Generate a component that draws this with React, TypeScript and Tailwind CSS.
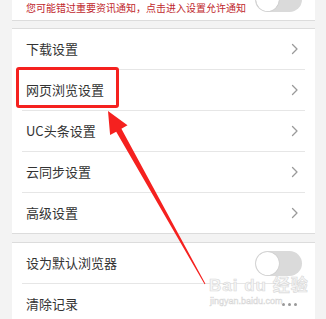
import React from 'react'

const font = { fontFamily: '"Noto Sans CJK SC", "Noto Sans", sans-serif' }

function Chevron() {
  return (
    <svg width="8" height="12" viewBox="0 0 8 12" className="shrink-0">
      <polyline points="1.5,1.5 6,6 1.5,10.5" fill="none" stroke="#9a9a9a" strokeWidth="1.3" strokeLinecap="round" strokeLinejoin="round" />
    </svg>
  )
}

function Toggle() {
  return (
    <div className="w-[47px] h-[25px] rounded-full bg-[#dadada] p-[1px] shrink-0">
      <div className="w-[23px] h-[23px] rounded-full bg-white shadow-[0_0_1px_rgba(0,0,0,0.25)]" />
    </div>
  )
}

function Row({ label, last }: { label: string; last?: boolean }) {
  return (
    <>
      <div className="h-[40px] flex items-center justify-between pl-[14px] pr-[16px]">
        <span className="text-[13px] text-[#333]">{label}</span>
        <Chevron />
      </div>
      {!last && <div className="mx-[10px] h-px bg-[#e6e6e6]" />}
    </>
  )
}

export default function App() {
  const rows = ['下载设置', '网页浏览设置', 'UC头条设置', '云同步设置', '高级设置']

  return (
    <div className="relative w-[326px] h-[319px] overflow-hidden bg-[#f3f3f3]" style={font}>
      <div className="mx-[12px] w-[303px]">
        {/* 通知 */}
        <div className="h-[21px] bg-white border-b border-[#dcdcdc] overflow-hidden flex items-end justify-between pl-[14px] pr-[13px]">
          <span className="text-[10px] leading-none text-[#c0272d] pb-[7px] whitespace-nowrap">
            您可能错过重要资讯通知，点击进入设置允许通知
          </span>
          <div className="mb-[8px]">
            <Toggle />
          </div>
        </div>

        <div className="h-[7px]" />

        <div className="bg-white border-y border-[#dcdcdc]">
          {rows.map((r, i) => (
            <Row key={r} label={r} last={i === rows.length - 1} />
          ))}
        </div>

        <div className="h-[8px]" />

        <div className="bg-white border-t border-[#dcdcdc]">
          <div className="h-[40px] flex items-center justify-between pl-[14px] pr-[13px]">
            <span className="text-[13px] text-[#333]">设为默认浏览器</span>
            <Toggle />
          </div>
          <div className="mx-[10px] h-px bg-[#e6e6e6]" />
          <div className="h-[40px] flex items-center justify-between pl-[14px] pr-[18px]">
            <span className="text-[13px] text-[#333]">清除记录</span>
            <div className="flex gap-[3px]">
              <span className="w-[3px] h-[3px] rounded-full bg-[#999]" />
              <span className="w-[3px] h-[3px] rounded-full bg-[#999]" />
              <span className="w-[3px] h-[3px] rounded-full bg-[#999]" />
            </div>
          </div>
        </div>
      </div>

      {/* 标注框 */}
      <div className="absolute left-[16px] top-[67px] w-[103px] h-[41px] border-[3px] border-[#f5211f] rounded-[3px]" />

      {/* 箭头 */}
      <svg className="absolute left-0 top-0" width="326" height="319" viewBox="0 0 326 319">
        <polygon
          points="108,111 127.5,125.3 121.4,128.7 205.4,283.8 204.6,284.2 116.2,131.7 110.1,135.1"
          fill="#f5211f"
        />
      </svg>

      {/* 水印 */}
      <div className="absolute left-[209px] top-[277px] flex flex-col items-start leading-none pointer-events-none">
        <span className="text-[17px] font-bold text-[#f6f6f6] [-webkit-text-stroke:0.6px_#d8d8d8] tracking-[1px]" style={{ fontFamily: '"Liberation Sans", "Noto Sans CJK SC", sans-serif' }}>
          Bai du 经验
        </span>
        <span className="text-[9px] text-[#f0f0f0] [-webkit-text-stroke:0.4px_#d4d4d4] mt-[3px] ml-[1px]" style={{ fontFamily: '"Liberation Sans", sans-serif' }}>
          jingyan.baidu.com
        </span>
      </div>
    </div>
  )
}
